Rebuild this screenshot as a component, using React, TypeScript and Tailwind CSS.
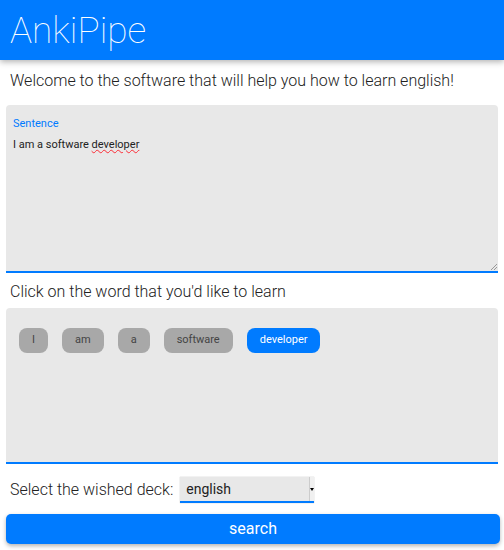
import { useState } from 'react';

const words = ['I', 'am', 'a', 'software', 'developer'];

export default function App() {
  const [selected, setSelected] = useState('developer');

  return (
    <div className="min-h-[550px] bg-white font-['Roboto',sans-serif] text-[#212121]">
      {/* Header */}
      <header className="h-[60px] bg-[#007bff] px-[10px] flex items-center shadow-[0_2px_6px_rgba(0,0,0,0.3)]">
        <h1 className="text-[37px] font-thin text-white leading-none">AnkiPipe</h1>
      </header>

      <p className="px-[10px] pt-[9px] text-[16px] font-light leading-[24px]">
        Welcome to the software that will help you how to learn english!
      </p>

      {/* Sentence textarea */}
      <div className="mx-[6px] mt-[12px] h-[168px] bg-[#e8e8e8] rounded-t-[4px] border-b-2 border-[#007bff] px-[7px] pt-[12px] relative">
        <label className="block text-[11px] text-[#007bff] leading-[14px]">Sentence</label>
        <p className="mt-[7px] text-[11px] leading-[14px] text-[#222]">
          I am a software <span className="underline decoration-wavy decoration-red-500 decoration-1">developer</span>
        </p>
        <svg className="absolute right-[1px] bottom-[1px]" width="6" height="6" viewBox="0 0 6 6">
          <path d="M6 0L0 6M6 3L3 6" stroke="#999" strokeWidth="1" />
        </svg>
      </div>

      <p className="px-[10px] pt-[8px] text-[16px] font-light leading-[22px]">Click on the word that you'd like to learn</p>

      {/* Words */}
      <div className="mx-[6px] mt-[5px] h-[156px] bg-[#e8e8e8] rounded-t-[4px] border-b-2 border-[#007bff] px-[13px] pt-[20px]">
        <div className="flex gap-[14px]">
          {words.map((w) => (
            <button
              key={w}
              onClick={() => setSelected(w)}
              className={
                w === selected
                  ? 'h-[25px] min-w-[29px] px-[13px] rounded-[8px] bg-[#007bff] text-white text-[11px]'
                  : 'h-[25px] min-w-[29px] px-[13px] rounded-[8px] bg-[#a8a8a8] text-[#444] text-[11px]'
              }
            >
              {w}
            </button>
          ))}
        </div>
      </div>

      {/* Deck select */}
      <div className="px-[10px] mt-[13px] flex items-center gap-[7px]">
        <span className="text-[16px] font-light">Select the wished deck:</span>
        <div className="relative w-[134px] h-[26px] bg-[#e8e8e8] border-b-2 border-[#007bff] flex items-center pl-[6px] shadow-[0_0_1px_rgba(0,0,0,0.3)]">
          <span className="text-[14px] text-[#222]">english</span>
          <div className="absolute right-0 top-0 h-[24px] w-[5px] bg-[#f0f0f0] border-l border-[#ccc] flex items-center justify-center">
            <div className="w-0 h-0 border-l-[2px] border-r-[2px] border-t-[3px] border-l-transparent border-r-transparent border-t-black" />
          </div>
        </div>
      </div>

      <button className="mx-[6px] mt-[11px] w-[494px] h-[30px] bg-[#007bff] rounded-[5px] text-white text-[16px] shadow-[0_2px_4px_rgba(0,0,0,0.3)]">
        search
      </button>
    </div>
  );
}
